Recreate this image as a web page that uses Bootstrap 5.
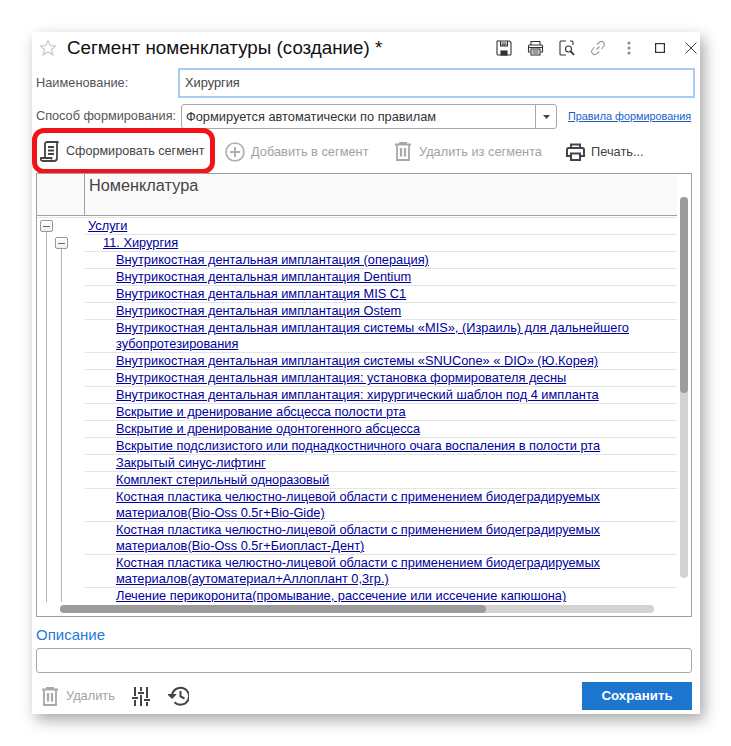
<!DOCTYPE html>
<html lang="ru"><head><meta charset="utf-8">
<link rel="stylesheet" href="https://cdn.jsdelivr.net/npm/bootstrap@5.3.0/dist/css/bootstrap.min.css">
<style>
html,body{height:100%;margin:0;background:#fff}
body{font-family:"Liberation Sans",Arial,sans-serif;font-size:12.8px;color:#444}
.stage{padding:32px 31px 32px 32px;height:746px;box-sizing:border-box}
.win{width:668px;height:682px;background:#fff;box-shadow:4px 6px 14px rgba(0,0,0,.35);padding:0 8px 0 4px;display:flex;flex-direction:column}
.hdr{height:34px;padding-left:3px;padding-bottom:2px}
.hdr h1{font-size:18.8px;font-weight:400;color:#111;margin:0 0 0 10px;line-height:32px;font-family:"Liberation Sans",sans-serif;white-space:nowrap}
.hdr-ic{margin-right:-15px}
.hi{width:31.2px;display:flex;justify-content:center}
.frm{height:33px}
.lbl{color:#555;width:142px;flex:none;white-space:nowrap}
.inp-a{width:517px;flex:none;height:30px;border:2px solid #a9cdf0;padding-left:5px;line-height:26px;color:#444}
.row2{height:31px;margin-top:2px}
.lbl2{width:145px;font-size:12.7px}
.sel{width:376px;height:25px;border:1px solid #a8a8a8;border-radius:3px;display:flex;align-items:center;padding-left:4px;color:#333;flex:none}
.sel .tx{flex:1;white-space:nowrap}
.sel .ar{width:21px;height:23px;border-left:1px solid #a8a8a8;display:flex;align-items:center;justify-content:center}
.lnk{color:#1a5fc8;font-size:10.85px;text-decoration:underline;margin-left:11px;white-space:nowrap}
.tb{height:39px;position:relative;padding-left:4px}
.tbi{display:flex;align-items:center;gap:6px;white-space:nowrap}
.w1{width:185px;font-size:12.6px}.w2{width:170px}.w3{width:171px;gap:8px}
.muted1{color:#a2a2a2}
.hl{position:absolute;left:-4px;top:-4px;width:183px;height:46px;border:5px solid #f01419;border-radius:12px}
.grid{position:relative;height:444px;border:1px solid #a0a0a0;overflow:hidden;flex:none;margin-top:2px}
.ghead{height:42px;background:#fafafa;border-bottom:1px solid #a0a0a0;display:flex;margin-right:14px}
.ghead .c0{width:48px;border-right:1px solid #a0a0a0}
.ghead .c1{font-size:16.3px;line-height:20px;padding:1px 4px;color:#444}
.gsep{height:2px;border-bottom:1px solid #e4e4e4;margin-right:14px}
.trow{border-bottom:1px solid #e4e4e4;margin-left:48px;margin-right:14px;font-size:12.8px;line-height:16px;min-height:17px;padding-right:24px}
.trow a{color:#00009c;text-decoration:underline}
.l0{padding-left:3px}.l1{padding-left:18px}.l2{padding-left:31px}
.tree{position:relative}
.vl{position:absolute;bottom:0;width:1px;background:#b4b4b4}
.vl1{left:9px;top:14px}.vl2{left:24px;top:31px}
.box{position:absolute;width:13px;height:12px;background:linear-gradient(#fff,#eee);border:1px solid #999;border-radius:2px}
.box::after{content:"";position:absolute;left:2px;right:2px;top:5px;height:1px;background:#666}
.bx1{left:3px;top:2px}.bx2{left:18px;top:19px}
.vs{position:absolute;right:1px;top:0;width:16px;bottom:16px}
.vs .th{position:absolute;left:6px;top:23px;width:8px;height:381px;border-radius:4px;background:#d3d3d3}
.vs .th2{position:absolute;left:0;top:0;width:8px;height:196px;border-radius:4px;background:#9c9c9c}
.hs{position:absolute;left:0;right:0;bottom:0;height:14px;background:#fff}
.hs .tr{position:absolute;left:23px;top:3px;width:594px;height:8px;border-radius:4px;background:#d3d3d3}
.hs .th3{position:absolute;left:0;top:0;width:426px;height:8px;border-radius:4px;background:#9c9c9c}
.tri{position:absolute;width:0;height:0}
.ta1{left:6px;top:8px}.ta2{left:6px;bottom:1px}.ta3{left:11px;top:3px}.ta4{right:22px;top:3px}
.desc{color:#1d7bd8;font-size:15px;line-height:20px;margin-top:8px}
.inp-d{height:25px;border:1px solid #a8a8a8;border-radius:3px;margin-top:3px;background:#fff}
.ft{height:36px;margin-top:5px;padding-left:6px}
.save{width:110px;height:28px;background:#1c76d0;color:#fff;border:0;border-radius:0;font-size:13.3px;font-weight:700;padding:0;line-height:28px;margin-left:auto}
.save:hover{background:#1c76d0;color:#fff}
.sm-g{color:#a2a2a2;gap:8px}
.ic-s{margin-left:17px}.ic-h{margin-left:18px}
.tri,.ic-s,.ic-h{flex:none}
</style></head><body>
<div class="stage"><div class="win">
 <div class="hdr d-flex align-items-center">
  <svg width="18" height="18" viewBox="0 0 18 18"><path d="M9 1.500l2.200 5 5.300.5-4 3.500 1.200 5.300L9 13l-4.700 2.800 1.200-5.300-4-3.500 5.300-.5z" fill="none" stroke="#c8c8c8" stroke-width="1.200"/></svg>
  <h1>Сегмент номенклатуры (создание) *</h1>
  <div class="hdr-ic d-flex align-items-center ms-auto">
   <div class="hi"><svg width="16" height="16" viewBox="0 0 16 16" fill="none" stroke="#333" stroke-width="1.100"><path d="M2.500 1h11l1.500 1.500v11.500a1 1 0 0 1-1 1H2a1 1 0 0 1-1-1V2a1 1 0 0 1 1.500-1z"/><path d="M4.500 1v5h7V1M5.500 3h5M5.500 4.800h5"/><rect x="5" y="11" width="6" height="4" fill="#333"/></svg></div>
   <div class="hi"><svg width="17" height="16" viewBox="0 0 17 16" fill="none" stroke="#333" stroke-width="1.100"><path d="M4 5V1.500h9V5M3.500 12H1.500V6a1 1 0 0 1 1-1h12a1 1 0 0 1 1 1v6h-2"/><rect x="4" y="9" width="9" height="6"/><path d="M1.500 7.500h14M5.500 11h6M5.500 13h6"/></svg></div>
   <div class="hi"><svg width="16" height="16" viewBox="0 0 16 16" fill="none" stroke="#333" stroke-width="1.100"><path d="M7 1H2a1 1 0 0 0-1 1v12a1 1 0 0 0 1 1h5M11 1h2a1 1 0 0 1 1 1v3"/><circle cx="9.500" cy="9" r="3"/><path d="M11.800 11.300L15 15" stroke-width="1.800"/></svg></div>
   <div class="hi"><svg width="16" height="16" viewBox="0 0 16 16" fill="none" stroke="#999" stroke-width="1.100"><path d="M6.500 9.500l3-3M7 4.500l2-2a3 3 0 0 1 4.500 4l-2 2.500M9 11.500l-2 2a3 3 0 0 1-4.500-4L4.500 7"/></svg></div>
   <div class="hi"><svg width="4" height="14" viewBox="0 0 4 14" fill="#888"><circle cx="2" cy="2" r="1.500"/><circle cx="2" cy="7" r="1.500"/><circle cx="2" cy="12" r="1.500"/></svg></div>
   <div class="hi"><svg width="10" height="10" viewBox="0 0 10 10" fill="none" stroke="#333" stroke-width="1.200"><rect x=".6" y=".6" width="8.800" height="8.800"/></svg></div>
   <div class="hi"><svg width="12" height="12" viewBox="0 0 12 12" fill="none" stroke="#444" stroke-width="1"><path d="M.5.500l11 11M11.500.500l-11 11"/></svg></div>
  </div>
 </div>
 <div class="frm d-flex align-items-center"><div class="lbl">Наименование:</div><div class="inp-a">Хирургия</div></div>
 <div class="row2 d-flex align-items-center"><div class="lbl lbl2">Способ формирования:</div>
  <div class="sel"><span class="tx">Формируется автоматически по правилам</span><span class="ar"><svg width="7" height="4" viewBox="0 0 7 4" fill="#444"><path d="M0 0h7L3.500 4z"/></svg></span></div>
  <a class="lnk" href="#">Правила формирования</a></div>
 <div class="tb d-flex align-items-center">
  <div class="hl"></div>
  <div class="tbi w1"><svg width="20" height="22" viewBox="0 0 20 22" fill="none" stroke="#444" stroke-width="1.800"><path d="M5 18V3a2 2 0 0 1 2-2h11.500a2 2 0 0 0-1.500 2v14a3 3 0 0 1-3 3H2.500A2 2 0 0 1 1 17h10.500v1.500"/><path d="M8 6h6M8 9.500h6M8 13h6"/></svg><span>Сформировать сегмент</span></div>
  <div class="tbi muted1 w2"><svg width="20" height="20" viewBox="0 0 20 20" fill="none" stroke="#b0b0b0" stroke-width="1.700"><circle cx="10" cy="10" r="9"/><path d="M10 5v10M5 10h10" stroke-width="2"/></svg><span>Добавить в сегмент</span></div>
  <div class="tbi muted1 w3"><svg width="16" height="19" viewBox="0 0 16 19" fill="none" stroke="#a8a8a8" stroke-width="1.800"><path d="M0 2.500h16M5 2.500V.9h6v1.600"/><path d="M2 2.500V18h12V2.500"/><path d="M6 6v8.500M10 6v8.500" stroke-width="2.200"/></svg><span>Удалить из сегмента</span></div>
  <div class="tbi"><svg width="19" height="18" viewBox="0 0 19 18" fill="none" stroke="#444" stroke-width="2"><path d="M5 5V1.500h9V5M4.500 13H1V6.500a1.500 1.500 0 0 1 1.500-1.500h14a1.500 1.500 0 0 1 1.500 1.500V13h-3.500"/><rect x="5" y="10.500" width="9" height="6.500"/></svg><span>Печать...</span></div>
 </div>
 <div class="grid">
  <div class="ghead"><div class="c0"></div><div class="c1">Номенклатура</div></div>
  <div class="gsep"></div>
  <div class="tree">
   <div class="vl vl1"></div><div class="vl vl2"></div>
   <div class="box bx1"></div><div class="box bx2"></div>
   <div class="trow l0"><a href="#">Услуги</a></div>
   <div class="trow l1"><a href="#">11. Хирургия</a></div>
   <div class="trow l2"><a href="#">Внутрикостная дентальная имплантация (операция)</a></div>
   <div class="trow l2"><a href="#">Внутрикостная дентальная имплантация Dentium</a></div>
   <div class="trow l2"><a href="#">Внутрикостная дентальная имплантация MIS C1</a></div>
   <div class="trow l2"><a href="#">Внутрикостная дентальная имплантация Ostem</a></div>
   <div class="trow l2"><a href="#">Внутрикостная дентальная имплантация системы «MIS», (Израиль) для дальнейшего зубопротезирования</a></div>
   <div class="trow l2"><a href="#">Внутрикостная дентальная имплантация системы «SNUCone» « DIO» (Ю.Корея)</a></div>
   <div class="trow l2"><a href="#">Внутрикостная дентальная имплантация: установка формирователя десны</a></div>
   <div class="trow l2"><a href="#">Внутрикостная дентальная имплантация: хирургический шаблон под 4 импланта</a></div>
   <div class="trow l2"><a href="#">Вскрытие и дренирование абсцесса полости рта</a></div>
   <div class="trow l2"><a href="#">Вскрытие и дренирование одонтогенного абсцесса</a></div>
   <div class="trow l2"><a href="#">Вскрытие подслизистого или поднадкостничного очага воспаления в полости рта</a></div>
   <div class="trow l2"><a href="#">Закрытый синус-лифтинг</a></div>
   <div class="trow l2"><a href="#">Комплект стерильный одноразовый</a></div>
   <div class="trow l2"><a href="#">Костная пластика челюстно-лицевой области с применением биодеградируемых материалов(Bio-Oss 0.5г+Bio-Gide)</a></div>
   <div class="trow l2"><a href="#">Костная пластика челюстно-лицевой области с применением биодеградируемых материалов(Bio-Oss 0.5г+Биопласт-Дент)</a></div>
   <div class="trow l2"><a href="#">Костная пластика челюстно-лицевой области с применением биодеградируемых материалов(аутоматериал+Аллоплант 0,3гр.)</a></div>
   <div class="trow l2"><a href="#">Лечение перикоронита(промывание, рассечение или иссечение капюшона)</a></div>
  </div>
  <div class="vs">
   <svg class="tri ta1" width="8" height="5" viewBox="0 0 8 5" fill="#ccc"><path d="M4 0l4 5H0z"/></svg>
   <div class="th"><div class="th2"></div></div>
   <svg class="tri ta2" width="8" height="5" viewBox="0 0 8 5" fill="#666"><path d="M0 0h8L4 5z"/></svg>
  </div>
  <div class="hs">
   <svg class="tri ta3" width="5" height="8" viewBox="0 0 5 8" fill="#ccc"><path d="M5 0v8L0 4z"/></svg>
   <div class="tr"><div class="th3"></div></div>
   <svg class="tri ta4" width="5" height="8" viewBox="0 0 5 8" fill="#666"><path d="M0 0v8l5-4z"/></svg>
  </div>
 </div>
 <div class="desc">Описание</div>
 <div class="inp-d"></div>
 <div class="ft d-flex align-items-center">
  <div class="tbi sm-g"><svg width="16" height="19" viewBox="0 0 16 19" fill="none" stroke="#a8a8a8" stroke-width="1.800"><path d="M0 2.500h16M5 2.500V.9h6v1.600"/><path d="M2 2.500V18h12V2.500"/><path d="M6 6v8.500M10 6v8.500" stroke-width="2.200"/></svg><span>Удалить</span></div>
  <svg class="ic-s" width="18" height="19" viewBox="0 0 18 19" fill="none" stroke="#444" stroke-width="2"><path d="M3 0v9M3 13v6M9 0v4M9 8v11M15 0v11M15 15v4"/><path d="M0 11h6M6 6h6M12 13h6" stroke-width="2"/></svg>
  <svg class="ic-h" width="21" height="20" viewBox="0 0 21 20" fill="none" stroke="#444" stroke-width="2"><path d="M4 10a8.500 8.500 0 1 1 2.500 6.200"/><path d="M0 8.500l4 4 4-4z" stroke-width="1" fill="#444"/><path d="M12.500 5v5.500l4 2"/></svg>
  <button class="btn save">Сохранить</button>
 </div>
</div></div>
</body></html>
